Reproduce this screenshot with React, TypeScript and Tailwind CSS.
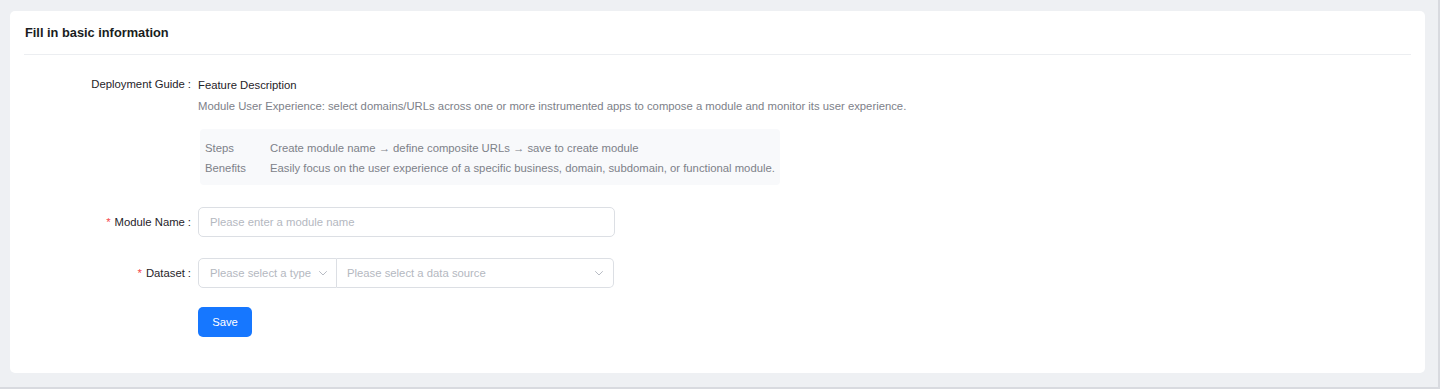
import React from "react";

const Chevron = () => (
  <svg width="12" height="12" viewBox="0 0 12 12" fill="none" className="shrink-0">
    <path d="M2.5 4.5L6 8l3.5-3.5" stroke="#b8bcc4" strokeWidth="1" strokeLinecap="round" strokeLinejoin="round" />
  </svg>
);

const Label = ({ text, required }: { text: string; required?: boolean }) => (
  <div className="w-[188px] shrink-0 flex justify-end items-center pr-[7px] text-[11.3px] text-[#1f2329] whitespace-nowrap">
    {required && <span className="text-[#f5474d] mr-[4px]">*</span>}
    <span>{text}</span>
    <span className="ml-[3px]">:</span>
  </div>
);

export default function App() {
  return (
    <div
      className="w-full h-[389px] bg-[#eef0f3] pt-[11px] pl-[10px] pr-[13px] border-b-2 border-b-[#d8dadf] border-r-2 border-r-[#d8dadf]"
      style={{ fontFamily: '"Liberation Sans", Arial, sans-serif' }}
    >
      <div className="bg-white rounded-[5px] h-[362px] flex flex-col">
        <div className="mx-[14px] h-[44px] border-b border-[#eceef1] flex items-center pl-[1px]">
          <span className="text-[12.8px] font-bold text-[#1a1d21]">Fill in basic information</span>
        </div>

        <div className="pt-[21px] flex flex-col">
          <div className="flex items-start">
            <Label text="Deployment Guide" />
            <div className="flex flex-col text-[11.3px] whitespace-nowrap">
              <div className="h-[18px] leading-[18px] text-[#1f2329]">Feature Description</div>
              <div className="h-[18px] leading-[18px] mt-[3px] text-[#7d8189]">
                Module User Experience: select domains/URLs across one or more instrumented apps to compose a module and monitor its user experience.
              </div>
              <div className="mt-[14px] ml-[2px] w-[580px] bg-[#f8f9fb] rounded-[4px] pt-[9px] pb-[7px] px-[5px] text-[#7d8189]">
                <div className="flex h-[20px] leading-[20px]">
                  <span className="w-[65px] shrink-0">Steps</span>
                  <span>Create module name → define composite URLs → save to create module</span>
                </div>
                <div className="flex h-[20px] leading-[20px]">
                  <span className="w-[65px] shrink-0">Benefits</span>
                  <span>Easily focus on the user experience of a specific business, domain, subdomain, or functional module.</span>
                </div>
              </div>
            </div>
          </div>

          <div className="flex items-center mt-[22px] h-[30px]">
            <Label text="Module Name" required />
            <div className="w-[417px] h-[30px] border border-[#dcdfe4] rounded-[5px] flex items-center px-[11px] text-[11.3px] text-[#b4b8bf] whitespace-nowrap">
              Please enter a module name
            </div>
          </div>

          <div className="flex items-center mt-[21px] h-[30px]">
            <Label text="Dataset" required />
            <div className="flex w-[416px] h-[30px] text-[11.3px] text-[#b4b8bf] whitespace-nowrap">
              <div className="w-[139px] h-full border border-[#dcdfe4] rounded-l-[5px] flex items-center justify-between pl-[11px] pr-[7px]">
                <span>Please select a type</span>
                <Chevron />
              </div>
              <div className="flex-1 h-full border border-l-0 border-[#dcdfe4] rounded-r-[5px] flex items-center justify-between pl-[10px] pr-[8px]">
                <span>Please select a data source</span>
                <Chevron />
              </div>
            </div>
          </div>

          <div className="flex mt-[19px]">
            <div className="w-[188px] shrink-0" />
            <button className="w-[54px] h-[30px] bg-[#1677ff] rounded-[5px] text-white text-[11.3px] flex items-center justify-center">
              Save
            </button>
          </div>
        </div>
      </div>
    </div>
  );
}
